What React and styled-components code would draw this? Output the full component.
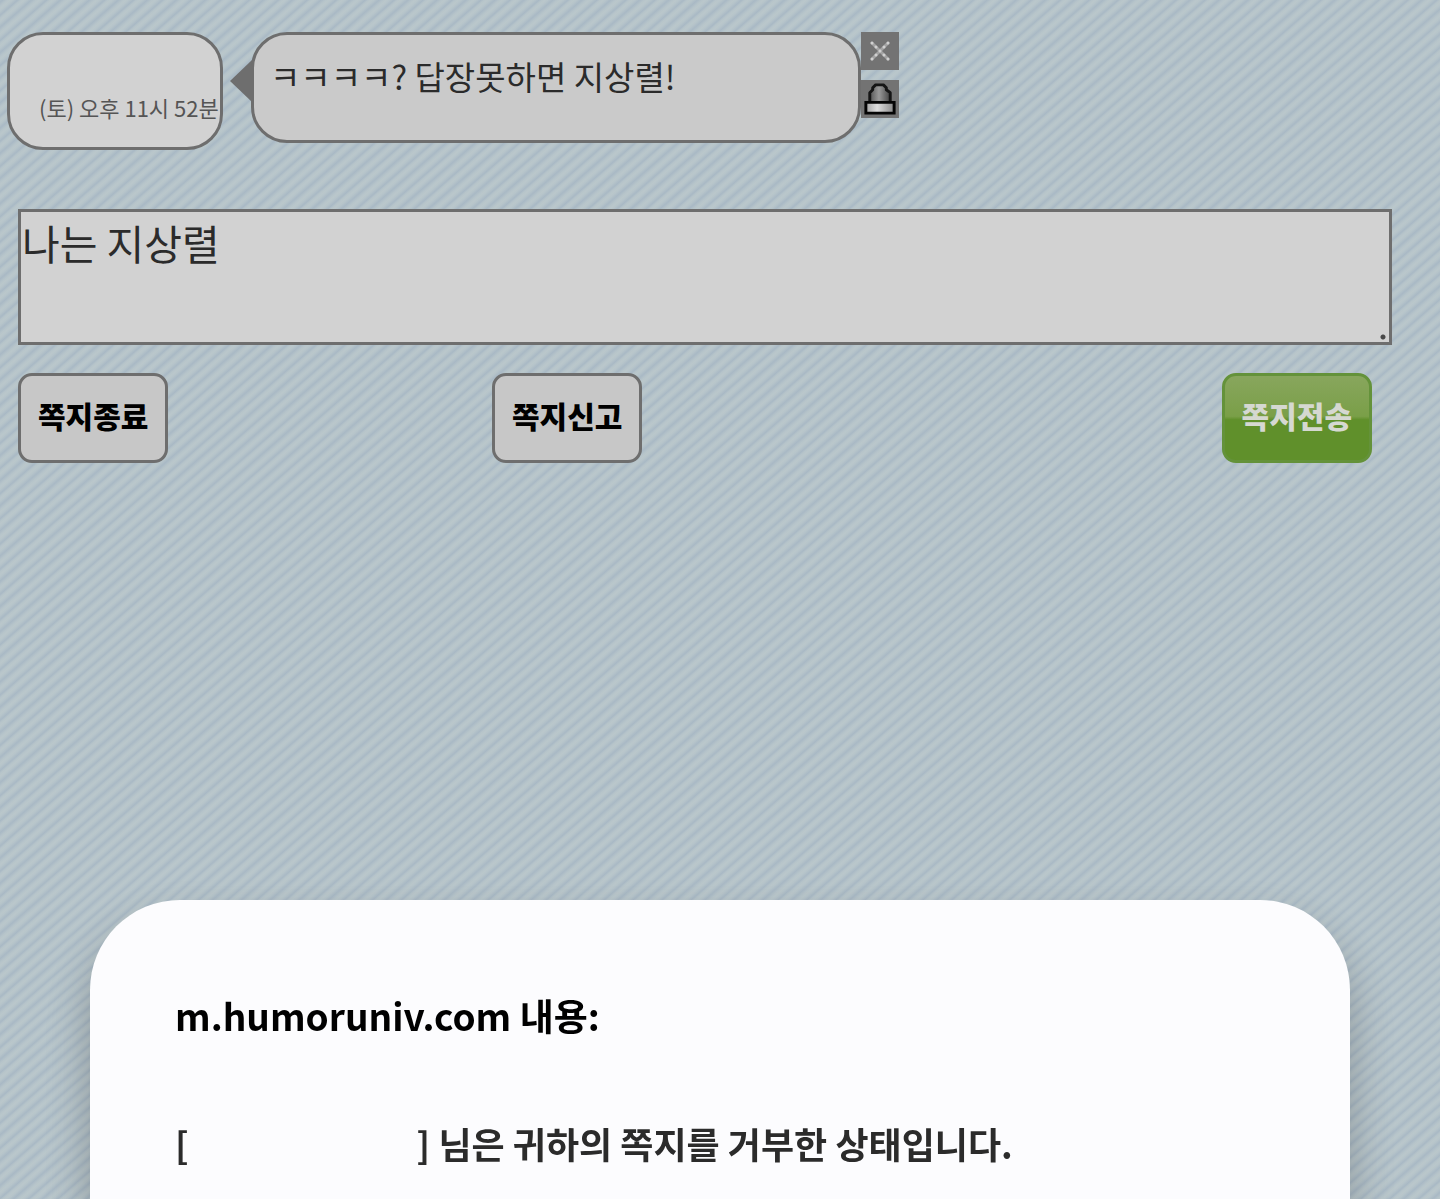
import React, { useState } from 'react';
import styled, { createGlobalStyle, css } from 'styled-components';

const GlobalStyle = createGlobalStyle`
  * {
    box-sizing: border-box;
  }
  body {
    margin: 0;
    font-family: 'Noto Sans CJK KR', sans-serif;
    color: #2b2b2b;
    background-color: #b7c4ca;
    background-image: repeating-linear-gradient(
      -41deg,
      #bac7cb 0,
      #b6c4ca 2px,
      #a9b9c5 5px,
      #b6c4ca 8px,
      #bac7cb 10px,
      #b6c4ca 12px,
      #a9b9c5 14px,
      #b6c4ca 17px,
      #bac7cb 19px
    );
  }
`;

const Page = styled.main`
  min-height: 100vh;
  padding-top: 32px;
`;

const Thread = styled.section`
  display: flex;
  align-items: flex-start;
  padding: 0 7px;
`;

const bubble = css`
  border: 3px solid #6e6e6e;
  border-radius: 36px;
`;

const Sender = styled.div`
  ${bubble}
  width: 216px;
  height: 118px;
  padding: 54px 0 0 29px;
  background: #d2d2d2;
`;

const Time = styled.time`
  display: block;
  font-size: 22px;
  line-height: 36px;
  color: #555;
  white-space: nowrap;
`;

const Arrow = styled.svg`
  width: 22px;
  height: 42px;
  margin: 28px 0 0 7px;
`;

const Message = styled.p`
  ${bubble}
  flex: 0 1 610px;
  min-height: 111px;
  margin: 0 0 0 -1px;
  padding: 17px 16px;
  background: #cacaca;
  font-size: 33px;
  line-height: 48px;
`;

const Tools = styled.div`
  display: flex;
  flex-direction: column;
  gap: 10px;
`;

const ToolButton = styled.button`
  display: block;
  width: 38px;
  height: 38px;
  padding: 0;
  border: 0;
  background: #737373;

  svg {
    display: block;
    width: 38px;
    height: 38px;
  }
`;

const Form = styled.form`
  padding: 59px 0 0 18px;
`;

const Reply = styled.textarea`
  display: block;
  width: calc(100% - 48px);
  height: 136px;
  padding: 0 1px;
  border: 3px solid #6e6e6e;
  border-radius: 0;
  background: #d2d2d2;
  color: #2b2b2b;
  font: inherit;
  font-size: 41px;
  line-height: 60px;

  &::-webkit-resizer {
    background: radial-gradient(circle at 9px 10px, #484848 2px, transparent 3px);
  }
`;

const Actions = styled.div`
  display: grid;
  grid-template-columns: repeat(3, 1fr);
  justify-items: start;
  margin-top: 28px;
`;

const Button = styled.button`
  height: 90px;
  padding: 0 17px 6px;
  border: 3px solid #6e6e6e;
  border-radius: 14px;
  background: #c7c7c7;
  color: #000;
  font: inherit;
  font-size: 30px;
  font-weight: 900;

  ${(props) =>
    props.$primary &&
    css`
      justify-self: end;
      margin-right: 68px;
      border-color: #64923a;
      background: linear-gradient(#88a65d, #7a9f48 48%, #60902b 52%, #60902b);
      color: #d5d8d1;
    `}
`;

const Overlay = styled.div`
  position: fixed;
  inset: 0;
  display: flex;
  align-items: flex-end;
  padding: 0 90px;
  pointer-events: none;
`;

const Dialog = styled.section`
  flex: 1;
  padding: 84px 85px 25px;
  border-radius: 90px 90px 0 0;
  background: #fcfcfe;
  box-shadow: 0 24px 44px rgba(0, 0, 0, 0.24);
  pointer-events: auto;
`;

const DialogTitle = styled.h1`
  margin: 0 0 66px;
  color: #000;
  font-size: 37px;
  font-weight: 700;
  line-height: 62px;
`;

const DialogText = styled.p`
  margin: 0;
  font-size: 36px;
  font-weight: 700;
  line-height: 62px;
`;

// the user name is hidden, only its place between the brackets stays
const Name = styled.span`
  display: inline-block;
  width: 228px;
`;

function CloseIcon() {
  return (
    <svg viewBox="0 0 38 38" aria-hidden="true">
      <path d="M11 11l16 16M27 11L11 27" stroke="#a3a3a3" strokeWidth="3" strokeLinecap="round" />
      <path
        d="M11 11l16 16M27 11L11 27"
        stroke="#d0d0d0"
        strokeWidth="3"
        strokeLinecap="round"
        strokeDasharray="0 5.65"
      />
    </svg>
  );
}

function LockIcon() {
  return (
    <svg viewBox="0 0 39 39" aria-hidden="true">
      <defs>
        <linearGradient id="dome">
          <stop offset="0" stopColor="#555" />
          <stop offset="0.45" stopColor="#999" />
          <stop offset="1" stopColor="#444" />
        </linearGradient>
        <linearGradient id="base">
          <stop offset="0" stopColor="#a5a5a5" />
          <stop offset="0.4" stopColor="#dedede" />
          <stop offset="1" stopColor="#888" />
        </linearGradient>
      </defs>
      <path
        d="M9 23V13l3-3V8l3-3h8l3 3v2l4 3v10z"
        fill="url(#dome)"
        stroke="#151515"
        strokeWidth="3"
        strokeLinejoin="round"
      />
      <path d="M5 23h29v11H5z" fill="url(#base)" stroke="#050505" strokeWidth="3" />
    </svg>
  );
}

function App() {
  const [reply, setReply] = useState('나는 지상렬');

  return (
    <>
      <GlobalStyle />
      <Page>
        <Thread>
          <Sender>
            <Time>(토) 오후 11시 52분</Time>
          </Sender>
          <Arrow viewBox="0 0 22 42" aria-hidden="true">
            <path d="M22 0v42L0 21z" fill="#6e6e6e" />
          </Arrow>
          <Message>ㅋㅋㅋㅋ? 답장못하면 지상렬!</Message>
          <Tools>
            <ToolButton type="button" aria-label="삭제">
              <CloseIcon />
            </ToolButton>
            <ToolButton type="button" aria-label="신고">
              <LockIcon />
            </ToolButton>
          </Tools>
        </Thread>
        <Form onSubmit={(e) => e.preventDefault()}>
          <Reply
            aria-label="쪽지 내용"
            value={reply}
            onChange={(e) => setReply(e.target.value)}
          />
          <Actions>
            <Button type="button">쪽지종료</Button>
            <Button type="button">쪽지신고</Button>
            <Button type="submit" $primary>
              쪽지전송
            </Button>
          </Actions>
        </Form>
      </Page>
      <Overlay>
        <Dialog role="dialog" aria-labelledby="dialog-title">
          <DialogTitle id="dialog-title">m.humoruniv.com 내용:</DialogTitle>
          <DialogText>
            [<Name />] 님은 귀하의 쪽지를 거부한 상태입니다.
          </DialogText>
        </Dialog>
      </Overlay>
    </>
  );
}

export default App;
